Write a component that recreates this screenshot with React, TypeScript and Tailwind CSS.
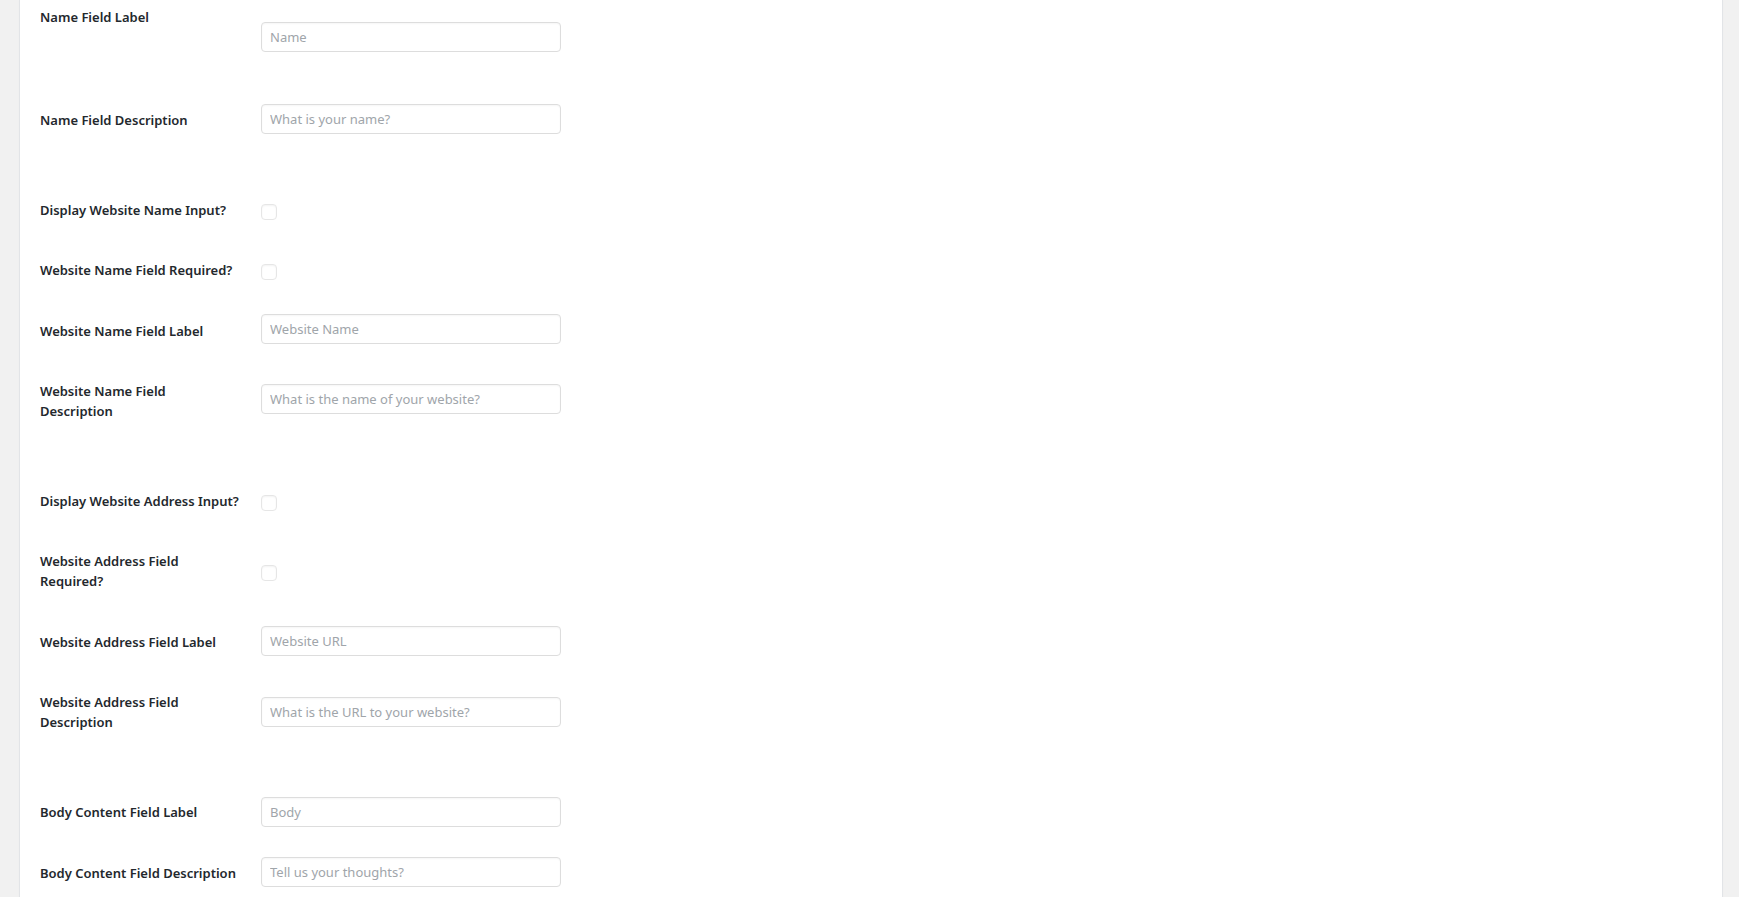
type Row = {
  label: string;
  kind: "text" | "check";
  placeholder?: string;
  row: string;
  labelTop: string;
  ctrlTop: string;
};

const rows: Row[] = [
  { label: "Name Field Label", kind: "text", placeholder: "Name", row: "h-[104px]", labelTop: "mt-[7px]", ctrlTop: "mt-[22px]" },
  { label: "Name Field Description", kind: "text", placeholder: "What is your name?", row: "h-[96px]", labelTop: "mt-[6px]", ctrlTop: "mt-0" },
  { label: "Display Website Name Input?", kind: "check", row: "h-[60px]", labelTop: "mt-0", ctrlTop: "mt-[4px]" },
  { label: "Website Name Field Required?", kind: "check", row: "h-[54px]", labelTop: "mt-0", ctrlTop: "mt-[4px]" },
  { label: "Website Name Field Label", kind: "text", placeholder: "Website Name", row: "h-[67px]", labelTop: "mt-[7px]", ctrlTop: "mt-0" },
  { label: "Website Name Field Description", kind: "text", placeholder: "What is the name of your website?", row: "h-[110px]", labelTop: "mt-0", ctrlTop: "mt-[3px]" },
  { label: "Display Website Address Input?", kind: "check", row: "h-[60px]", labelTop: "mt-0", ctrlTop: "mt-[4px]" },
  { label: "Website Address Field Required?", kind: "check", row: "h-[75px]", labelTop: "mt-0", ctrlTop: "mt-[14px]" },
  { label: "Website Address Field Label", kind: "text", placeholder: "Website URL", row: "h-[66px]", labelTop: "mt-[6px]", ctrlTop: "mt-0" },
  { label: "Website Address Field Description", kind: "text", placeholder: "What is the URL to your website?", row: "h-[105px]", labelTop: "mt-0", ctrlTop: "mt-[5px]" },
  { label: "Body Content Field Label", kind: "text", placeholder: "Body", row: "h-[60px]", labelTop: "mt-[5px]", ctrlTop: "mt-0" },
  { label: "Body Content Field Description", kind: "text", placeholder: "Tell us your thoughts?", row: "h-[60px]", labelTop: "mt-[6px]", ctrlTop: "mt-0" },
];

export default function App() {
  return (
    <div className="h-[897px] overflow-hidden bg-[#f1f1f1] pl-[19px] pr-[16px] font-['Noto_Sans',sans-serif]">
      <div className="h-full bg-white border-x border-[#e2e4e7] shadow-[0_1px_1px_rgba(0,0,0,0.04)] pl-[20px]">
        {rows.map((r) => (
          <div key={r.label} className={`flex items-start ${r.row}`}>
            <label
              className={`w-[200px] shrink-0 text-[13px] leading-[20px] font-semibold text-[#23282d] ${r.labelTop}`}
            >
              {r.label}
            </label>
            <div className={`ml-[21px] ${r.ctrlTop}`}>
              {r.kind === "text" ? (
                <input
                  type="text"
                  placeholder={r.placeholder}
                  className="block w-[300px] h-[30px] px-[8px] rounded-[4px] border border-[#dddddd] bg-white text-[13px] text-[#32373c] placeholder:text-[#a0a5aa] shadow-[inset_0_1px_2px_rgba(0,0,0,0.04)] outline-none"
                />
              ) : (
                <input
                  type="checkbox"
                  className="block appearance-none w-[16px] h-[16px] rounded-[4px] border border-[#e6e6e6] bg-white shadow-[inset_0_1px_2px_rgba(0,0,0,0.05)]"
                />
              )}
            </div>
          </div>
        ))}
      </div>
    </div>
  );
}
